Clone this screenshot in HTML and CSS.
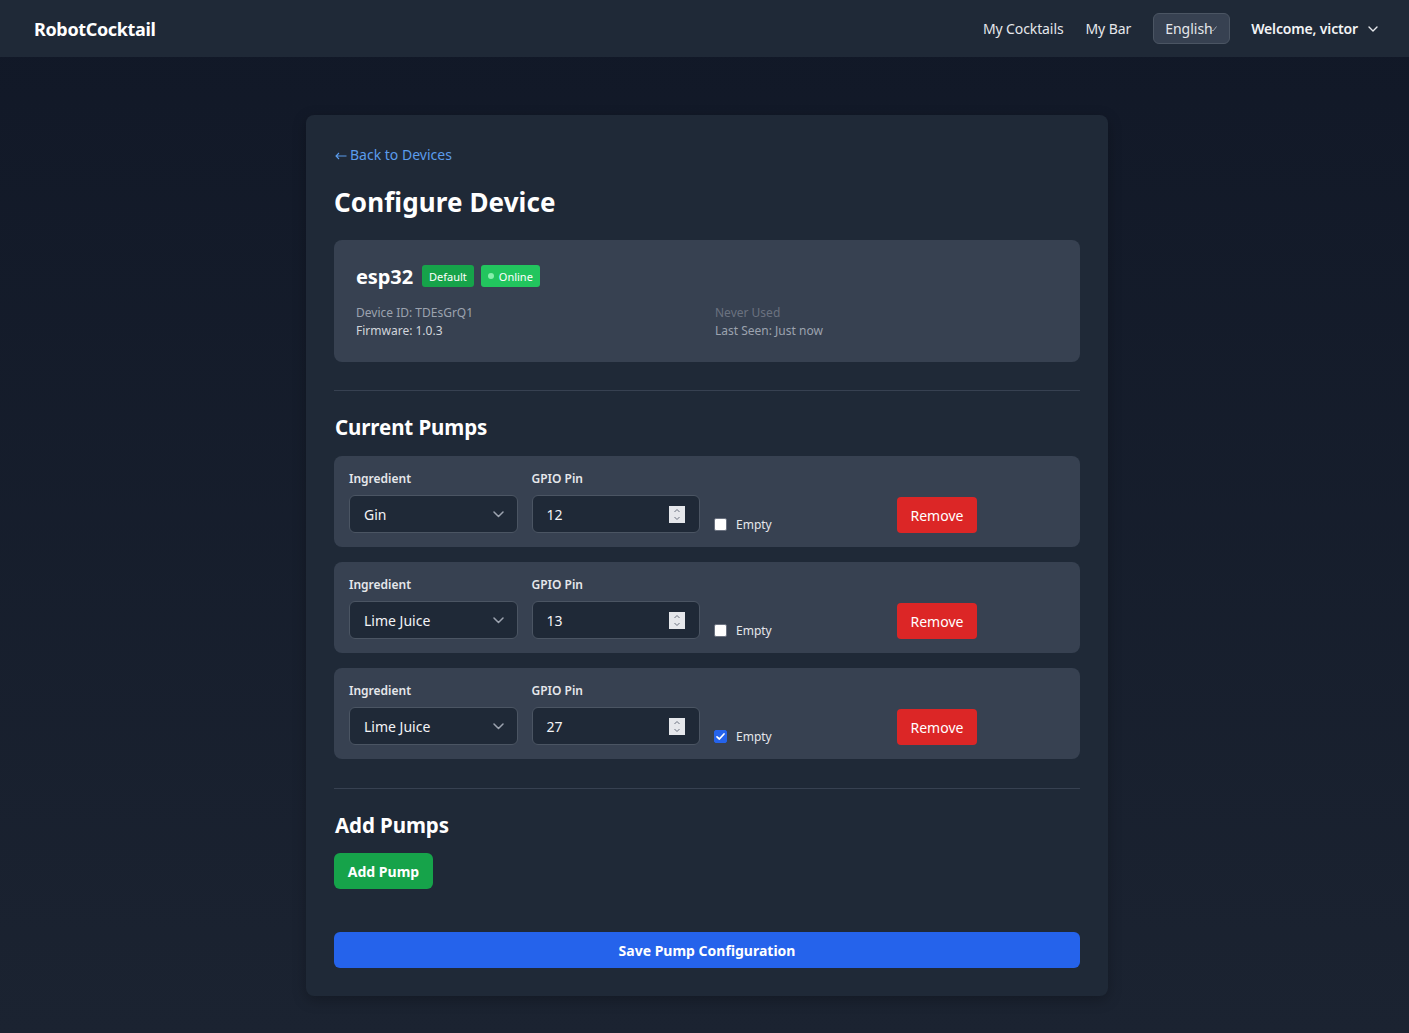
FILE: index.html
```html
<!DOCTYPE html>
<html lang="en">
<head>
<meta charset="utf-8">
<title>Configure Device - RobotCocktail</title>
<link rel="stylesheet" href="styles.css">
</head>
<body>
<nav class="navbar">
  <div class="brand">RobotCocktail</div>
  <div class="nav-right">
    <a class="nav-link" href="#">My Cocktails</a>
    <a class="nav-link" href="#">My Bar</a>
    <div class="lang-select">English<svg class="lang-chev" width="6" height="6" viewBox="0 0 6 6"><path d="M0.5 3.5 L2 5 L5.5 0.5" fill="none" stroke="#9ca3af" stroke-width="1"/></svg></div>
    <div class="user-menu">Welcome, victor
      <svg class="user-chev" width="10" height="6" viewBox="0 0 10 6"><path d="M1 1 L5 5 L9 1" fill="none" stroke="#e5e7eb" stroke-width="1.4" stroke-linecap="round" stroke-linejoin="round"/></svg>
    </div>
  </div>
</nav>

<main class="page">
  <div class="card">
    <a class="back-link" href="#"><svg class="back-arrow" width="12" height="8" viewBox="0 0 12 8"><path d="M11.5 4 H1 M4 1 L1 4 L4 7" fill="none" stroke="#5b9cec" stroke-width="1.1"/></svg>Back to Devices</a>
    <h1 class="title">Configure Device</h1>

    <div class="device">
      <div class="device-head">
        <span class="device-name">esp32</span>
        <span class="badge badge-default">Default</span>
        <span class="badge badge-online"><span class="dot"></span>Online</span>
      </div>
      <div class="device-info">
        <div class="info-col">
          <div class="muted">Device ID: TDEsGrQ1</div>
          <div class="light">Firmware: 1.0.3</div>
        </div>
        <div class="info-col">
          <div class="dim">Never Used</div>
          <div class="muted">Last Seen: Just now</div>
        </div>
      </div>
    </div>

    <section class="section">
      <h2 class="section-title pumps-title">Current Pumps</h2>
      <div class="pump-list">
        <div class="pump">
          <div class="field">
            <div class="label">Ingredient</div>
            <div class="control">Gin<svg class="sel-chev" width="11" height="7" viewBox="0 0 11 7"><path d="M1 1 L5.5 5.5 L10 1" fill="none" stroke="#9ca3af" stroke-width="1.5" stroke-linecap="round" stroke-linejoin="round"/></svg></div>
          </div>
          <div class="field">
            <div class="label">GPIO Pin</div>
            <div class="control control-num">12<span class="spinner"><svg width="16" height="17" viewBox="0 0 16 17"><rect width="16" height="17" fill="#e5e7eb"/><path d="M5.5 6 L8 3.5 L10.5 6" fill="none" stroke="#6b7280" stroke-width="1"/><path d="M5.5 11 L8 13.5 L10.5 11" fill="none" stroke="#6b7280" stroke-width="1"/></svg></span></div>
          </div>
          <label class="check"><span class="box"></span>Empty</label>
          <div class="actions"><button class="btn btn-red">Remove</button></div>
        </div>

        <div class="pump">
          <div class="field">
            <div class="label">Ingredient</div>
            <div class="control">Lime Juice<svg class="sel-chev" width="11" height="7" viewBox="0 0 11 7"><path d="M1 1 L5.5 5.5 L10 1" fill="none" stroke="#9ca3af" stroke-width="1.5" stroke-linecap="round" stroke-linejoin="round"/></svg></div>
          </div>
          <div class="field">
            <div class="label">GPIO Pin</div>
            <div class="control control-num">13<span class="spinner"><svg width="16" height="17" viewBox="0 0 16 17"><rect width="16" height="17" fill="#e5e7eb"/><path d="M5.5 6 L8 3.5 L10.5 6" fill="none" stroke="#6b7280" stroke-width="1"/><path d="M5.5 11 L8 13.5 L10.5 11" fill="none" stroke="#6b7280" stroke-width="1"/></svg></span></div>
          </div>
          <label class="check"><span class="box"></span>Empty</label>
          <div class="actions"><button class="btn btn-red">Remove</button></div>
        </div>

        <div class="pump">
          <div class="field">
            <div class="label">Ingredient</div>
            <div class="control">Lime Juice<svg class="sel-chev" width="11" height="7" viewBox="0 0 11 7"><path d="M1 1 L5.5 5.5 L10 1" fill="none" stroke="#9ca3af" stroke-width="1.5" stroke-linecap="round" stroke-linejoin="round"/></svg></div>
          </div>
          <div class="field">
            <div class="label">GPIO Pin</div>
            <div class="control control-num">27<span class="spinner"><svg width="16" height="17" viewBox="0 0 16 17"><rect width="16" height="17" fill="#e5e7eb"/><path d="M5.5 6 L8 3.5 L10.5 6" fill="none" stroke="#6b7280" stroke-width="1"/><path d="M5.5 11 L8 13.5 L10.5 11" fill="none" stroke="#6b7280" stroke-width="1"/></svg></span></div>
          </div>
          <label class="check"><span class="box box-on"><svg width="13" height="13" viewBox="0 0 13 13"><path d="M3 6.8 L5.4 9 L10 4" fill="none" stroke="#fff" stroke-width="1.7" stroke-linecap="round" stroke-linejoin="round"/></svg></span>Empty</label>
          <div class="actions"><button class="btn btn-red">Remove</button></div>
        </div>
      </div>
    </section>

    <section class="section section-add">
      <h2 class="section-title add-title">Add Pumps</h2>
      <button class="btn btn-green">Add Pump</button>
    </section>

    <button class="btn btn-save">Save Pump Configuration</button>
  </div>
</main>
</body>
</html>
```

FILE: styles.css
```css
* { box-sizing: border-box; }

html, body {
  margin: 0;
  padding: 0;
}

body {
  font-family: "Noto Sans", "Open Sans", sans-serif;
  color: #f3f4f6;
  background: linear-gradient(to bottom, #111827 0%, #1b2331 100%);
  min-height: 1033px;
}

a { text-decoration: none; }

.navbar {
  height: 57px;
  background: #1f2937;
  display: flex;
  align-items: center;
  justify-content: space-between;
  padding: 0 31px 0 34px;
}

.brand {
  font-size: 18px;
  font-weight: 700;
  color: #ffffff;
  letter-spacing: -0.35px;
}

.nav-right {
  display: flex;
  align-items: center;
}

.nav-link {
  color: #e5e7eb;
  font-size: 14px;
  margin-right: 22px;
  letter-spacing: -0.1px;
}

.lang-select {
  position: relative;
  height: 31px;
  width: 77px;
  border: 1px solid #4b5563;
  background: #374151;
  border-radius: 6px;
  padding-left: 11px;
  display: flex;
  align-items: center;
  font-size: 14px;
  color: #e5e7eb;
  margin-right: 21px;
}

.lang-chev {
  position: absolute;
  left: 57px;
  top: 12px;
}

.user-menu {
  display: flex;
  align-items: center;
  font-size: 14px;
  font-weight: 600;
  color: #f3f4f6;
  letter-spacing: -0.15px;
}

.user-chev { margin-left: 10px; }

.page {
  display: flex;
  justify-content: center;
  padding: 58px 0 37px 5px;
}

.card {
  width: 802px;
  background: #1f2937;
  border-radius: 8px;
  padding: 30px 28px 28px;
  box-shadow: 0 4px 14px rgba(0, 0, 0, 0.25);
  display: flex;
  flex-direction: column;
  align-items: flex-start;
}

.back-link {
  display: flex;
  align-items: center;
  color: #5b9cec;
  font-size: 14px;
  line-height: 20px;
  height: 20px;
  margin-left: 1px;
}

.back-arrow {
  margin-right: 3px;
  margin-top: 1px;
}

.title {
  margin: 19px 0 20px;
  font-size: 26px;
  line-height: 36px;
  font-weight: 700;
  color: #ffffff;
  letter-spacing: 0.1px;
}

.device {
  width: 100%;
  background: #374151;
  border-radius: 8px;
  padding: 21px 22px 22px;
}

.device-head {
  display: flex;
  align-items: center;
  height: 30px;
}

.device-name {
  font-size: 20px;
  font-weight: 700;
  color: #ffffff;
  margin-right: 9px;
  letter-spacing: -0.1px;
}

.badge {
  display: inline-flex;
  align-items: center;
  height: 22px;
  padding: 0 7px;
  border-radius: 3px;
  font-size: 11px;
  color: #ffffff;
  margin-right: 7px;
}

.badge-default { background: #16a34a; }
.badge-online { background: #22c55e; }

.dot {
  width: 6px;
  height: 6px;
  border-radius: 50%;
  background: #86efac;
  margin-right: 5px;
}

.device-info {
  margin-top: 13px;
  display: grid;
  grid-template-columns: 1fr 1fr;
  column-gap: 16px;
  font-size: 12px;
  line-height: 18px;
}

.muted { color: #9ca3af; }
.light { color: #d1d5db; }
.dim { color: #6b7280; }

.section {
  width: 100%;
  margin-top: 28px;
  border-top: 1px solid #374151;
  padding-top: 22px;
}

.section-add { margin-top: 29px; }

.section-title {
  margin: 0;
  font-size: 20.5px;
  line-height: 28px;
  font-weight: 700;
  color: #ffffff;
  letter-spacing: -0.1px;
  padding-left: 1px;
}

.pumps-title { margin-bottom: 15px; }
.add-title { margin-bottom: 14px; }

.pump-list {
  display: flex;
  flex-direction: column;
  gap: 15px;
}

.pump {
  background: #374151;
  border-radius: 8px;
  padding: 15px 15px 14px;
  display: grid;
  grid-template-columns: repeat(4, 1fr);
  column-gap: 14px;
  align-items: end;
}

.label {
  font-size: 12px;
  line-height: 16px;
  font-weight: 600;
  color: #e5e7eb;
  margin-bottom: 8px;
}

.control {
  position: relative;
  height: 38px;
  border: 1px solid #4b5563;
  background: #1f2937;
  border-radius: 6px;
  display: flex;
  align-items: center;
  padding-left: 14px;
  font-size: 14px;
  color: #f3f4f6;
}

.control-num { padding-left: 14px; }

.sel-chev {
  position: absolute;
  right: 13px;
  top: 15px;
}

.spinner {
  position: absolute;
  right: 14px;
  top: 10px;
  display: flex;
}

.check {
  display: flex;
  align-items: center;
  font-size: 12px;
  color: #e5e7eb;
  height: 18px;
  margin-bottom: 0;
}

.box {
  width: 13px;
  height: 13px;
  border: 1px solid #6b7280;
  background: #ffffff;
  border-radius: 2px;
  margin-right: 9px;
  display: inline-flex;
}

.box-on {
  background: #2563eb;
  border-color: #2563eb;
}

.box-on svg { margin: -1px; }

.actions {
  display: flex;
  padding-bottom: 0;
}

.btn {
  font-family: inherit;
  border: none;
  color: #ffffff;
  font-size: 14px;
  cursor: pointer;
}

.btn-red {
  background: #dc2626;
  height: 36px;
  padding: 0 14px;
  border-radius: 4px;
  margin-bottom: 0;
}

.btn-green {
  background: #16a34a;
  height: 36px;
  width: 99px;
  border-radius: 6px;
  font-weight: 700;
}

.btn-save {
  margin-top: 43px;
  width: 100%;
  height: 36px;
  background: #2563eb;
  border-radius: 6px;
  font-weight: 700;
}
```
